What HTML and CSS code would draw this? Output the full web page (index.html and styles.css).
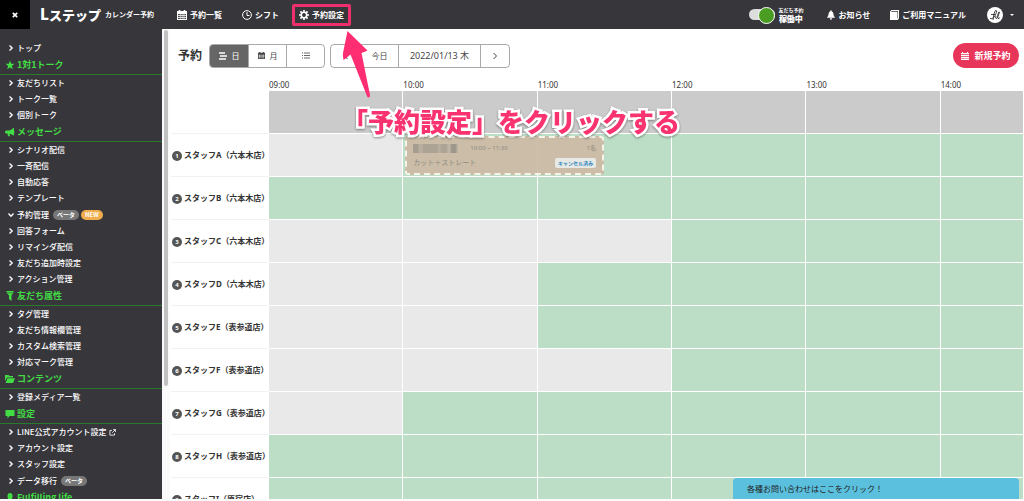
FILE: index.html
```html
<!DOCTYPE html>
<html lang="ja">
<head>
<meta charset="utf-8">
<meta name="viewport" content="width=device-width, initial-scale=1">
<title>Lステップ カレンダー予約</title>
<link rel="stylesheet" href="styles.css">
</head>
<body>
<svg class="defs" aria-hidden="true">
  <symbol id="chev" viewBox="0 0 6 8"><path d="M1.500 1.500 4.200 4 1.500 6.500" fill="none" stroke="currentColor" stroke-width="1.300"/></symbol>
  <symbol id="cal" viewBox="0 0 18 18"><path fill="currentColor" d="M3 0h3v2h6V0h3v2h3v16H0V2h3zM2 7v2.500h3V7zm4.300 0v2.500h2.200V7zm3.400 0v2.500h2.200V7zM13.300 7v2.500H16V7zM2 10.800v2H5v-2zm4.300 0v2h2.200v-2zm3.400 0v2h2.200v-2zm3.600 0v2H16v-2zM2 14v2h3v-2zm4.300 0v2h2.200v-2zm3.400 0v2h2.200v-2zm3.600 0v2H16v-2z" fill-rule="evenodd"/></symbol>
</svg>
<div class="app">
  <header class="header">
    <button class="close" aria-label="閉じる"><svg width="6" height="6" viewBox="0 0 6 6"><path d="M.8.8l4.400 4.400M5.200.8.8 5.200" stroke="#fff" stroke-width="1.700"/></svg></button>
    <a class="brand" href="#"><span class="logo"><b>L</b>ステップ</span><span class="product">カレンダー予約</span></a>
    <nav class="nav">
      <a href="#"><svg class="ico" viewBox="0 0 18 18"><use href="#cal"/></svg>予約一覧</a>
      <a href="#"><svg class="ico" viewBox="0 0 20 20"><g fill="none" stroke="currentColor" stroke-width="2"><circle cx="10" cy="10" r="8.800"/><path d="M10 4v7h5"/></g></svg>シフト</a>
      <a href="#" class="marked"><svg class="ico" viewBox="0 0 20 20"><g stroke="currentColor"><circle cx="10" cy="10" r="5.500" fill="none" stroke-width="3.200"/><path stroke-width="3.400" d="M10 0v4M10 16v4M0 10h4M16 10h4M2.900 2.900l2.800 2.800M14.300 14.300l2.800 2.800M2.900 17.100l2.800-2.800M14.300 5.700l2.800-2.800"/></g></svg>予約設定
        <svg class="arrow" viewBox="0 0 30 70" aria-hidden="true"><path d="M6.500 1 26.500 20.500Q23 22 20.500 23L29 65Q29.200 67.500 27.500 67.500 26.500 67.500 26 66L9.500 24.500Q5.500 28 2.500 30 1.500 26 2 23Z" fill="#ff2d72"/></svg>
      </a>
    </nav>
    <div class="tools">
      <label class="switch"><input type="checkbox" checked><span class="track"></span><span class="state"><small>友だち予約</small><b>稼働中</b></span></label>
      <a class="notice" href="#"><svg width="8" height="10" viewBox="0 0 16 19"><path fill="currentColor" d="M8 0q1.500 0 1.500 2Q13 3.500 13 8q0 4 3 6.500V15H0v-.5Q3 12 3 8q0-4.500 3.500-6Q6.500 0 8 0zM5.500 16h5q-.5 3-2.500 3t-2.500-3z"/></svg>お知らせ</a>
      <a class="manual" href="#"><svg width="9" height="10" viewBox="0 0 18 20"><path fill="currentColor" d="M3 0h15v17l-3 3H0V3zM2 3.500h13V17l1-1V2H3.500z" fill-rule="evenodd"/><path fill="currentColor" d="M1 4h13v15H1z"/></svg>ご利用マニュアル</a>
      <button class="user" aria-label="アカウント"><svg width="16" height="16" viewBox="0 0 16 16"><circle cx="8" cy="8" r="8" fill="#fff"/><path d="M3 11.500q4 1 6-5Q10.500 3 9 3.200 7 4 6 13M4 7.500h4M9 9q-1 3 .5 2.500T12.500 5Q12 4 11 7t0 4.500q1 .3 2-1" fill="none" stroke="#333" stroke-width=".9"/></svg><span class="caret"></span></button>
    </div>
  </header>

  <div class="body">
    <aside class="sidebar">
      <ul>
        <li><a href="#"><svg class="chev"><use href="#chev"/></svg>トップ</a></li>
      </ul>
      <h2><svg viewBox="0 0 20 20"><path fill="currentColor" d="m10 1 2.400 6.400 6.600.3-5.200 4.200 1.800 6.600L10 14.800l-5.600 3.700 1.800-6.600L1 7.700l6.600-.3z"/></svg>1対1トーク</h2>
      <ul>
        <li><a href="#"><svg class="chev"><use href="#chev"/></svg>友だちリスト</a></li>
        <li><a href="#"><svg class="chev"><use href="#chev"/></svg>トーク一覧</a></li>
        <li><a href="#"><svg class="chev"><use href="#chev"/></svg>個別トーク</a></li>
      </ul>
      <h2><svg viewBox="0 0 20 20"><path fill="currentColor" d="M18 2v15l-2-.5Q13 14 9 13.500l1 5H6L5 13H2Q0 13 0 10.500T2 7h6q5-.5 8-4.500zM19 8v4q1-.5 1-2t-1-2z"/></svg>メッセージ</h2>
      <ul>
        <li><a href="#"><svg class="chev"><use href="#chev"/></svg>シナリオ配信</a></li>
        <li><a href="#"><svg class="chev"><use href="#chev"/></svg>一斉配信</a></li>
        <li><a href="#"><svg class="chev"><use href="#chev"/></svg>自動応答</a></li>
        <li><a href="#"><svg class="chev"><use href="#chev"/></svg>テンプレート</a></li>
        <li class="badged"><a href="#"><svg class="chev open"><use href="#chev"/></svg>予約管理<span class="pill">ベータ</span><span class="pill new">NEW</span></a></li>
        <li><a href="#"><svg class="chev"><use href="#chev"/></svg>回答フォーム</a></li>
        <li><a href="#"><svg class="chev"><use href="#chev"/></svg>リマインダ配信</a></li>
        <li><a href="#"><svg class="chev"><use href="#chev"/></svg>友だち追加時設定</a></li>
        <li><a href="#"><svg class="chev"><use href="#chev"/></svg>アクション管理</a></li>
      </ul>
      <h2><svg viewBox="0 0 20 20"><path fill="currentColor" d="M3 0h14v3l-4 6v11l-5-4V9L3 3z"/><path d="M3 3.500h14" stroke="#37363b"/></svg>友だち属性</h2>
      <ul>
        <li><a href="#"><svg class="chev"><use href="#chev"/></svg>タグ管理</a></li>
        <li><a href="#"><svg class="chev"><use href="#chev"/></svg>友だち情報欄管理</a></li>
        <li><a href="#"><svg class="chev"><use href="#chev"/></svg>カスタム検索管理</a></li>
        <li><a href="#"><svg class="chev"><use href="#chev"/></svg>対応マーク管理</a></li>
      </ul>
      <h2><svg viewBox="0 0 20 20"><path fill="currentColor" d="M0 2h7l2 2h7v3H4L0 14zM5 8.500h15L16 18H1z"/></svg>コンテンツ</h2>
      <ul>
        <li><a href="#"><svg class="chev"><use href="#chev"/></svg>登録メディア一覧</a></li>
      </ul>
      <h2><svg viewBox="0 0 20 20"><path fill="currentColor" d="M1 2h18v12H9l-4 5v-5H1z"/></svg>設定</h2>
      <ul>
        <li><a href="#"><svg class="chev"><use href="#chev"/></svg>LINE公式アカウント設定<svg class="ext" viewBox="0 0 12 12"><path d="M5 2.500H1.500v8h8V7M7 1h4v4M11 1 5.500 6.500" fill="none" stroke="currentColor" stroke-width="1.400"/></svg></a></li>
        <li><a href="#"><svg class="chev"><use href="#chev"/></svg>アカウント設定</a></li>
        <li><a href="#"><svg class="chev"><use href="#chev"/></svg>スタッフ設定</a></li>
        <li class="badged"><a href="#"><svg class="chev"><use href="#chev"/></svg>データ移行<span class="pill">ベータ</span></a></li>
      </ul>
      <h2><svg viewBox="0 0 20 20"><path fill="currentColor" d="M10 0q5 0 5 6t-3 8v2q5 1 5 4H3q0-3 5-4v-2Q5 12 5 6t5-6z"/></svg>Fulfilling life</h2>
    </aside>
    <div class="scroll"><div class="thumb"></div></div>

    <main class="main">
      <div class="toolbar">
        <h1>予約</h1>
        <div class="group views">
          <button class="on"><svg width="8" height="8" viewBox="0 0 8 8"><path d="M0 1h6M1 4h7M0 7h7" stroke="currentColor" stroke-width="1.400"/></svg>日</button>
          <button><svg width="7" height="7" viewBox="0 0 18 18"><use href="#cal"/></svg>月</button>
          <button aria-label="リスト"><svg width="8" height="7" viewBox="0 0 8 7"><path d="M0 1h1M2 1h6M0 3.500h1M2 3.500h6M0 6h1M2 6h6" stroke="currentColor" stroke-width=".8"/></svg></button>
        </div>
        <div class="group dates">
          <button aria-label="前へ"><svg width="6" height="8" viewBox="0 0 6 8"><path d="M4.500 1 1.500 4l3 3" fill="none" stroke="currentColor"/></svg></button>
          <button class="today">今日</button>
          <button class="date">2022/01/13 木</button>
          <button aria-label="次へ"><svg width="6" height="8" viewBox="0 0 6 8"><path d="M1.500 1l3 3-3 3" fill="none" stroke="currentColor"/></svg></button>
        </div>
        <button class="create"><svg width="8" height="8" viewBox="0 0 8 8"><path d="M0 1h1V0h1v1h4V0h1v1h1v1.200H0zM0 3h8v1.300H0zM0 5h8v1.200H0zM0 6.800h8V8H0z" fill="currentColor"/></svg>新規予約</button>
      </div>

      <table class="calendar">
        <colgroup><col class="c-name"><col class="c-hour"><col class="c-hour"><col class="c-hour"><col class="c-hour"><col class="c-hour"><col></colgroup>
        <thead><tr><td></td><th scope="col">09:00</th><th scope="col">10:00</th><th scope="col">11:00</th><th scope="col">12:00</th><th scope="col">13:00</th><th scope="col">14:00</th></tr></thead>
        <tbody>
          <tr class="total"><th></th><td></td><td></td><td></td><td></td><td></td><td></td></tr>
          <tr><th scope="row"><span class="num">1</span>スタッフA（六本木店）</th><td class="off"></td><td>
            <div class="event">
              <div class="line"><span class="mosaic"></span><span class="time">10:00 ~ 11:30</span><span class="count">1名</span></div>
              <div class="line"><span class="menu">カット＋ストレート</span><span class="tag">キャンセル済み</span></div>
            </div></td><td></td><td></td><td></td><td></td></tr>
          <tr><th scope="row"><span class="num">2</span>スタッフB（六本木店）</th><td></td><td></td><td></td><td></td><td></td><td></td></tr>
          <tr><th scope="row"><span class="num">3</span>スタッフC（六本木店）</th><td class="off"></td><td class="off"></td><td class="off"></td><td></td><td></td><td></td></tr>
          <tr><th scope="row"><span class="num">4</span>スタッフD（六本木店）</th><td class="off"></td><td class="off"></td><td></td><td></td><td></td><td></td></tr>
          <tr><th scope="row"><span class="num">5</span>スタッフE（表参道店）</th><td class="off"></td><td class="off"></td><td></td><td></td><td></td><td></td></tr>
          <tr><th scope="row"><span class="num">6</span>スタッフF（表参道店）</th><td class="off"></td><td class="off"></td><td class="off"></td><td></td><td></td><td></td></tr>
          <tr><th scope="row"><span class="num">7</span>スタッフG（表参道店）</th><td class="off"></td><td></td><td></td><td></td><td></td><td></td></tr>
          <tr><th scope="row"><span class="num">8</span>スタッフH（表参道店）</th><td></td><td></td><td></td><td></td><td></td><td></td></tr>
          <tr><th scope="row"><span class="num">9</span>スタッフI（原宿店）</th><td></td><td></td><td></td><td></td><td></td><td></td></tr>
        </tbody>
      </table>
      <p class="callout">「予約設定」をクリックする</p>
      <button class="contact">各種お問い合わせはここをクリック！</button>
    </main>
  </div>
</div>
</body>
</html>
```
FILE: styles.css
```css
* { box-sizing: border-box; }
body {
  margin: 0;
  background: #fafafa;
  color: #333;
  font: 8px/16px "Noto Sans", "Noto Sans CJK JP", sans-serif;
}
a { color: inherit; text-decoration: none; }
button { font: inherit; color: inherit; border: 0; padding: 0; background: none; }
ul { list-style: none; margin: 0; padding: 0; }
.defs { position: absolute; width: 0; height: 0; }
.app { display: flex; flex-direction: column; height: calc(100vh - 2px); overflow: hidden; background: #fff; }

/* header */
.header { flex: none; display: flex; align-items: center; height: 29px; background: #37363b; color: #fff; font-weight: 700; }
.header svg { flex: none; }
.close { width: 30px; height: 29px; background: #000; display: flex; align-items: center; justify-content: center; }
.brand { display: flex; align-items: center; gap: 4px; margin-left: 10px; white-space: nowrap; }
.logo { font-size: 13px; font-weight: 900; font-family: "Noto Sans CJK JP", sans-serif; }
.logo b { font-size: 15px; font-weight: 900; }
.product { font-size: 7px; }
.nav { display: flex; align-items: center; gap: 20px; margin-left: 23px; }
.nav a, .tools a { display: flex; align-items: center; gap: 3px; white-space: nowrap; }
.ico { width: 10px; height: 10px; }
.marked { position: relative; z-index: 3; }
.marked::after { content: ""; position: absolute; inset: -3px -7px; border: 3px solid #ee2f6c; border-radius: 2px; }
.arrow { position: absolute; left: 42px; top: 23px; width: 30px; height: 70px; }
.tools { display: flex; align-items: center; margin-left: auto; padding-right: 10px; }
.switch { display: flex; align-items: center; gap: 3px; position: relative; margin-right: 24px; }
.switch input { position: absolute; opacity: 0; margin: 0; }
.track { position: relative; width: 26px; height: 11px; border-radius: 6px; background: #ddd; }
.track::after { content: ""; position: absolute; right: 0; top: -2px; width: 15px; height: 15px; border-radius: 50%; background: #4a9d22; border: 1px solid #fff; }
.state { display: flex; flex-direction: column; align-items: center; line-height: 9px; white-space: nowrap; }
.state small { font-size: 5px; line-height: 7px; }
.notice { margin-right: 20px; }
.manual { margin-right: 21px; }
.user { display: flex; align-items: center; gap: 7px; }
.caret { border: 2px solid transparent; border-top-color: #fff; border-bottom: 0; }

/* sidebar */
.body { flex: 1; display: flex; min-height: 0; }
.sidebar { flex: none; width: 162px; padding-top: 11px; overflow: hidden; background: #37363b; color: #fff; font-weight: 500; font-family: "Noto Sans CJK JP", sans-serif; }
.sidebar a { display: flex; align-items: center; height: 16px; padding-left: 8px; white-space: nowrap; }
.sidebar .badged a { height: 17px; }
.chev { width: 6px; height: 8px; margin-right: 3px; }
.chev.open { transform: rotate(90deg); }
.sidebar h2 { display: flex; align-items: center; gap: 2px; height: 19px; margin: 0; padding-left: 5px; border-bottom: 1px solid #287b2c; color: #42dc45; font-size: 9px; font-weight: 700; }
.sidebar h2 svg { width: 10px; height: 10px; }
.pill { margin-left: 4px; padding: 0 4px; border-radius: 5px; background: #777; font-size: 6px; line-height: 10px; font-weight: 700; }
.new { margin-left: 2px; background: #f0ad4e; }
.ext { width: 7px; height: 7px; margin-left: 2px; }
.scroll { flex: none; width: 8px; padding: 1px 2px; background: #fafafa; }
.thumb { height: 76%; border-radius: 2px; background: #c1c1c1; }

/* main area */
.main { flex: 1; position: relative; min-width: 0; padding-left: 1px; overflow: hidden; }
.toolbar { display: flex; align-items: center; height: 50px; padding: 3px 5px 0 7px; }
h1 { margin: 0 7px 0 0; font-size: 12px; font-weight: 700; }
.group { display: flex; height: 24px; margin-right: 5px; border: 1px solid #aaa; border-radius: 4px; overflow: hidden; background: #fff; color: #444; }
.group button { display: flex; align-items: center; justify-content: center; gap: 5px; }
.group button + button { border-left: 1px solid #aaa; }
.views button { width: 38px; }
.views .on { background: #666; color: #fff; }
.dates button { width: 29px; }
.dates .today { width: 38px; border-left-color: transparent; }
.dates .date { width: 82px; font-size: 9px; }
.create { display: flex; align-items: center; justify-content: center; gap: 5px; width: 66px; height: 25px; margin-left: auto; border-radius: 13px; background: #e73659; color: #fff; font-size: 9px; font-weight: 700; }

.calendar { width: 100%; table-layout: fixed; border-spacing: 0; }
.c-name { width: 98px; }
.c-hour { width: 15.75%; }
.calendar td, .calendar th { padding: 0; }
.calendar thead th { height: 12px; font-weight: 400; line-height: 12px; text-align: left; }
.calendar tbody td { position: relative; height: 43px; background: #bcdec6; border-right: 1px solid #fff; border-bottom: 1px solid #fff; }
.calendar tbody th { border-bottom: 1px solid #f2f2f2; text-align: left; white-space: nowrap; }
.calendar tbody .off { background: #e9e9e9; }
.calendar .total td { background: #cbcbcb; }
.num { display: inline-block; width: 10px; margin: 0 2px 0 1px; border-radius: 50%; background: #555; color: #fff; font-size: 6px; line-height: 10px; text-align: center; vertical-align: middle; }

.event { position: absolute; z-index: 1; left: 2px; top: 2px; width: 149%; height: 39px; padding: 5px 6px; border: 2px dashed #f4f4e8; border-radius: 3px; background: rgba(204, 185, 164, .9); color: #8f8b80; font-size: 6px; display: flex; flex-direction: column; justify-content: space-between; }
.line { display: flex; align-items: center; line-height: 10px; white-space: nowrap; }
.mosaic { width: 45px; height: 9px; margin-right: 12px; background: linear-gradient(90deg, #9b9589 10%, #b5aa9b 14% 20%, #a49c90 24% 54%, #b5aa9b 56% 60%, #a59d91 64% 74%, #bdb2a2 78% 82%, #918d83 86% 94%, #c3b8a7); opacity: .8; }
.count { margin-left: auto; }
.menu { font-size: 7px; }
.tag { margin-left: auto; padding: 0 3px; border-radius: 2px; background: #e6e9e4; color: #2f86bf; font-size: 5px; font-weight: 700; }

.callout { position: absolute; z-index: 2; left: 172px; top: 76px; margin: 0; color: #f9336f; font: 900 26px/32px "Noto Sans CJK JP", sans-serif; white-space: nowrap; -webkit-text-stroke: 5px #fff; paint-order: stroke fill; filter: drop-shadow(0 1px 1px rgba(0, 0, 0, .4)); }
.contact { position: absolute; z-index: 2; right: 5px; bottom: 0; width: 286px; height: 21px; padding: 0 14px; border-radius: 4px 4px 0 0; background: #5bc0de; color: #222; text-align: left; }
```
